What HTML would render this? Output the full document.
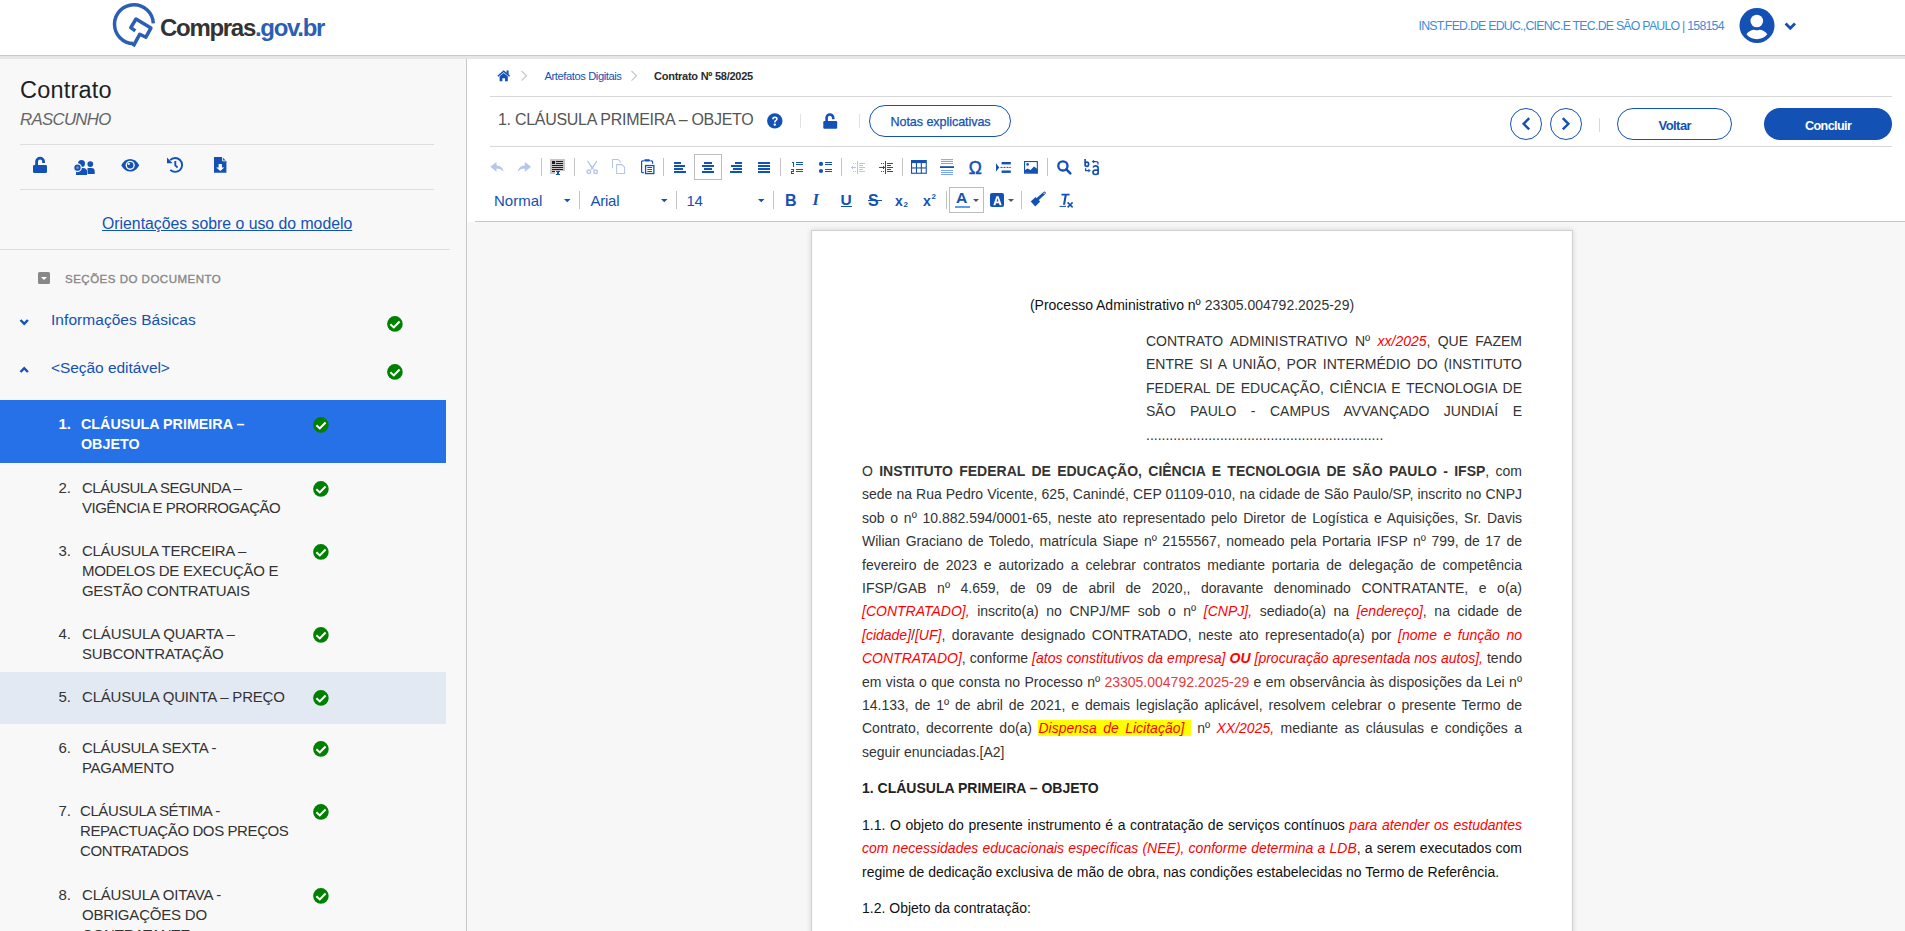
<!DOCTYPE html>
<html><head><meta charset="utf-8">
<style>
*{box-sizing:border-box}
html,body{margin:0;padding:0}
body{width:1905px;height:931px;overflow:hidden;position:relative;background:#fff;font-family:"Liberation Sans",sans-serif;color:#333}
.a{position:absolute}
.nw{white-space:nowrap}
svg{position:absolute;overflow:visible}
.sep{height:1px;background:#dedede}
.item{left:0;width:446px}
.num{left:58.5px;font-size:15px;line-height:20px;white-space:nowrap}
.txt{left:82px;font-size:15px;line-height:20px;letter-spacing:-0.3px;white-space:nowrap}
.p{position:absolute;left:862px;width:660px;font-size:14px;line-height:23.4px;text-align:justify;color:#333}
.r{color:#f00;font-style:italic}
.vs{width:1px;background:#c4c4c4}
.tl{font-size:15px;color:#1351b4;white-space:nowrap}
</style></head><body>

<!-- HEADER -->
<div class="a" style="left:0;top:0;width:1905px;height:55px;background:#fff"></div>
<div class="a" style="left:0;top:55px;width:1905px;height:1px;background:#c8c8c8"></div>
<div class="a" style="left:0;top:56px;width:1905px;height:3px;background:#e6e6e6"></div>

<svg style="left:108px;top:0" width="55" height="52" viewBox="0 0 55 52">
  <path d="M45.3 23.4 A19.4 19.4 0 1 0 25.4 43.6" fill="none" stroke="#2b5fb3" stroke-width="3.5"/>
  <path d="M25.2 46.4 L31.8 34.2 L37.9 37.2 L42.9 28.1 L28 19 L22.8 27.6 L27.3 30.9" fill="none" stroke="#2b5fb3" stroke-width="3.5" stroke-linejoin="round"/>
</svg>
<div class="a nw" style="left:160px;top:13px;font-size:24px;line-height:30px;font-weight:bold;letter-spacing:-1.3px;color:#333">Compras<span style="color:#2b5fb3">.gov.br</span></div>

<div class="a nw" style="left:1418.5px;top:18px;font-size:12.3px;line-height:16px;letter-spacing:-0.74px;color:#3b8dd9">INST.FED.DE EDUC.,CIENC.E TEC.DE SÃO PAULO | 158154</div>
<svg style="left:1739px;top:8px" width="36" height="36" viewBox="0 0 36 36">
  <circle cx="18" cy="17.5" r="17.5" fill="#1351b4"/>
  <circle cx="17.8" cy="13" r="6.3" fill="#fff"/>
  <path d="M7.4 26.3 C9.5 23.2 12.5 22 15.2 21.8 Q17.8 22.8 20.4 21.8 C23.3 22 26.2 23.2 28.3 26.3 C25.5 29.6 21.8 31.2 17.8 31.2 C13.8 31.2 10.2 29.6 7.4 26.3 Z" fill="#fff"/>
</svg>
<svg style="left:1784px;top:22px" width="13" height="9" viewBox="0 0 13 9">
  <path d="M1.6 1.6 L6.3 6.3 L11 1.6" fill="none" stroke="#1351b4" stroke-width="2.8"/>
</svg>

<!-- SIDEBAR -->
<div class="a" style="left:0;top:59px;width:466px;height:872px;background:#f8f8f8"></div>
<div class="a" style="left:466px;top:59px;width:1px;height:872px;background:#c8c8c8"></div>

<div class="a nw" style="left:20px;top:76px;font-size:23.5px;line-height:28px;color:#1f1f1f;letter-spacing:0.2px">Contrato</div>
<div class="a nw" style="left:20px;top:110px;font-size:16.8px;line-height:20px;font-style:italic;color:#666;letter-spacing:-0.68px">RASCUNHO</div>
<div class="a sep" style="left:20px;top:144px;width:414px"></div>
<div class="a sep" style="left:20px;top:189px;width:414px"></div>

<!-- sidebar tool icons -->
<svg style="left:33px;top:156px" width="15" height="17" viewBox="0 0 15 17">
  <path d="M3.6 9.4 V5.6 A3.5 3.5 0 0 1 10.6 5.6 V7" fill="none" stroke="#1351b4" stroke-width="2.8"/>
  <rect x="0" y="9" width="14" height="7.9" rx="1.2" fill="#1351b4"/>
</svg>
<svg style="left:73px;top:159px" width="23" height="17" viewBox="0 0 23 17">
  <circle cx="8.5" cy="4.5" r="3.5" fill="#1351b4"/>
  <path d="M3 16 V12.5 Q3 9 7 9 H10 Q14 9 14 12.5 V16 Z" fill="#1351b4"/>
  <circle cx="17.3" cy="5.1" r="2.9" fill="#1351b4"/>
  <path d="M14.5 15 V9.1 H18.5 Q21.7 9.1 21.7 12.5 V15 Z" fill="#1351b4"/>
  <circle cx="4.5" cy="8.7" r="3.8" fill="#1351b4" stroke="#f8f8f8" stroke-width="1.3"/>
  <circle cx="4.5" cy="8.7" r="1.4" fill="#6b8fd6"/>
</svg>
<svg style="left:121px;top:158.5px" width="19" height="14" viewBox="0 0 19 14">
  <path d="M0.2 6.3 C2.4 2 5.8 0 9.2 0 C12.6 0 16 2 18.2 6.3 C16 10.6 12.6 12.6 9.2 12.6 C5.8 12.6 2.4 10.6 0.2 6.3 Z" fill="#1351b4"/>
  <circle cx="9.2" cy="6.3" r="4.6" fill="#f8f8f8"/>
  <circle cx="9.2" cy="6.3" r="3.2" fill="#1351b4"/>
  <circle cx="7.8" cy="4.9" r="1.1" fill="#f8f8f8"/>
</svg>
<svg style="left:166px;top:156px" width="18" height="18" viewBox="0 0 18 18">
  <path d="M4.2 4.2 A6.9 6.9 0 1 1 4.3 13.8" fill="none" stroke="#1351b4" stroke-width="1.9"/>
  <path d="M1 1.5 V7.2 H6.6 Z" fill="#1351b4"/>
  <path d="M9.3 5 V9.4 L11.6 11.5" fill="none" stroke="#1351b4" stroke-width="1.9"/>
</svg>
<svg style="left:214px;top:157px" width="13" height="16" viewBox="0 0 13 16">
  <path d="M0 0 H8.2 L12.4 4.3 V15.8 H0 Z" fill="#1351b4"/>
  <path d="M8.6 0 V3.9 H12.4" fill="none" stroke="#f8f8f8" stroke-width="0.9"/>
  <path d="M4.6 7 H7.9 V10.5 H10.3 L6.25 14 L2.2 10.5 H4.6 Z" fill="#fff"/>
</svg>

<div class="a nw" style="left:102px;top:214.5px;font-size:15.8px;line-height:18px;color:#1351b4;text-decoration:underline;text-underline-offset:1px;letter-spacing:0px">Orientações sobre o uso do modelo</div>
<div class="a sep" style="left:0;top:249px;width:450px"></div>

<div class="a" style="left:38px;top:272px;width:12px;height:12px;background:#888;border-radius:1.5px"></div>
<div class="a" style="left:40.5px;top:276.5px;width:0;height:0;border-left:3.7px solid transparent;border-right:3.7px solid transparent;border-top:3.7px solid #fff"></div>
<div class="a nw" style="left:65px;top:273px;font-size:11.5px;line-height:13px;letter-spacing:0.5px;color:#888;-webkit-text-stroke:0.35px #888">SEÇÕES DO DOCUMENTO</div>

<svg style="left:19px;top:317.5px" width="11" height="9" viewBox="0 0 11 9">
  <path d="M1.5 2 L5.2 5.8 L8.9 2" fill="none" stroke="#1351b4" stroke-width="2.4"/>
</svg>
<div class="a nw" style="left:51px;top:310.5px;font-size:15.5px;line-height:18px;color:#1351b4;letter-spacing:0.05px">Informações Básicas</div>
<svg style="left:19px;top:365.2px" width="11" height="9" viewBox="0 0 11 9">
  <path d="M1.5 7 L5.2 3.2 L8.9 7" fill="none" stroke="#1351b4" stroke-width="2.4"/>
</svg>
<div class="a nw" style="left:51px;top:359px;font-size:15.5px;line-height:18px;color:#1351b4;letter-spacing:-0.06px">&lt;Seção editável&gt;</div>

<!-- check icons -->
<svg style="left:386.5px;top:316px" width="16" height="16" viewBox="0 0 16 16"><circle cx="7.9" cy="7.9" r="7.8" fill="#008000"/><path d="M3.4 8.2 L6.8 11.4 L12.6 5.6" fill="none" stroke="#fff" stroke-width="2.1"/></svg>
<svg style="left:386.5px;top:364px" width="16" height="16" viewBox="0 0 16 16"><circle cx="7.9" cy="7.9" r="7.8" fill="#008000"/><path d="M3.4 8.2 L6.8 11.4 L12.6 5.6" fill="none" stroke="#fff" stroke-width="2.1"/></svg>

<!-- items -->
<div class="a item" style="top:400px;height:63px;background:#2670e8"></div>
<div class="a num" style="top:414.1px;color:#fff;font-weight:bold">1.</div>
<div class="a txt" style="top:414.1px;left:81px;color:#fff;font-weight:bold;font-size:14.3px;letter-spacing:0">CLÁUSULA PRIMEIRA –<br>OBJETO</div>

<div class="a num" style="top:478.1px">2.</div>
<div class="a txt" style="top:478.1px;letter-spacing:-0.5px">CLÁUSULA SEGUNDA –<br>VIGÊNCIA E PRORROGAÇÃO</div>
<div class="a num" style="top:541.1px">3.</div>
<div class="a txt" style="top:541.1px">CLÁUSULA TERCEIRA –<br>MODELOS DE EXECUÇÃO E<br>GESTÃO CONTRATUAIS</div>
<div class="a num" style="top:624.1px">4.</div>
<div class="a txt" style="top:624.1px;letter-spacing:-0.15px">CLÁUSULA QUARTA –<br>SUBCONTRATAÇÃO</div>
<div class="a item" style="top:672px;height:52px;background:#e3e9f3"></div>
<div class="a num" style="top:687.1px">5.</div>
<div class="a txt" style="top:687.1px;letter-spacing:-0.2px">CLÁUSULA QUINTA – PREÇO</div>
<div class="a num" style="top:738.1px">6.</div>
<div class="a txt" style="top:738.1px">CLÁUSULA SEXTA -<br>PAGAMENTO</div>
<div class="a num" style="top:801.1px">7.</div>
<div class="a txt" style="top:801.1px;left:80px;letter-spacing:-0.4px">CLÁUSULA SÉTIMA -<br>REPACTUAÇÃO DOS PREÇOS<br>CONTRATADOS</div>
<div class="a num" style="top:885.1px">8.</div>
<div class="a txt" style="top:885.1px;letter-spacing:-0.2px">CLÁUSULA OITAVA -<br>OBRIGAÇÕES DO<br>CONTRATANTE</div>

<svg style="left:312.5px;top:417px" width="16" height="16" viewBox="0 0 16 16"><circle cx="7.9" cy="7.9" r="7.8" fill="#008000"/><path d="M3.4 8.2 L6.8 11.4 L12.6 5.6" fill="none" stroke="#fff" stroke-width="2.1"/></svg>
<svg style="left:312.5px;top:481px" width="16" height="16" viewBox="0 0 16 16"><circle cx="7.9" cy="7.9" r="7.8" fill="#008000"/><path d="M3.4 8.2 L6.8 11.4 L12.6 5.6" fill="none" stroke="#fff" stroke-width="2.1"/></svg>
<svg style="left:312.5px;top:544px" width="16" height="16" viewBox="0 0 16 16"><circle cx="7.9" cy="7.9" r="7.8" fill="#008000"/><path d="M3.4 8.2 L6.8 11.4 L12.6 5.6" fill="none" stroke="#fff" stroke-width="2.1"/></svg>
<svg style="left:312.5px;top:627px" width="16" height="16" viewBox="0 0 16 16"><circle cx="7.9" cy="7.9" r="7.8" fill="#008000"/><path d="M3.4 8.2 L6.8 11.4 L12.6 5.6" fill="none" stroke="#fff" stroke-width="2.1"/></svg>
<svg style="left:312.5px;top:690px" width="16" height="16" viewBox="0 0 16 16"><circle cx="7.9" cy="7.9" r="7.8" fill="#008000"/><path d="M3.4 8.2 L6.8 11.4 L12.6 5.6" fill="none" stroke="#fff" stroke-width="2.1"/></svg>
<svg style="left:312.5px;top:741px" width="16" height="16" viewBox="0 0 16 16"><circle cx="7.9" cy="7.9" r="7.8" fill="#008000"/><path d="M3.4 8.2 L6.8 11.4 L12.6 5.6" fill="none" stroke="#fff" stroke-width="2.1"/></svg>
<svg style="left:312.5px;top:804px" width="16" height="16" viewBox="0 0 16 16"><circle cx="7.9" cy="7.9" r="7.8" fill="#008000"/><path d="M3.4 8.2 L6.8 11.4 L12.6 5.6" fill="none" stroke="#fff" stroke-width="2.1"/></svg>
<svg style="left:312.5px;top:888px" width="16" height="16" viewBox="0 0 16 16"><circle cx="7.9" cy="7.9" r="7.8" fill="#008000"/><path d="M3.4 8.2 L6.8 11.4 L12.6 5.6" fill="none" stroke="#fff" stroke-width="2.1"/></svg>

<!-- BREADCRUMB -->
<svg style="left:496.5px;top:69.5px" width="14" height="12" viewBox="0 0 14 12">
  <path d="M0.8 6.2 L6.7 1.2 L12.6 6.2" fill="none" stroke="#1351b4" stroke-width="1.5"/>
  <rect x="9.6" y="0.4" width="2" height="3.8" fill="#1351b4"/>
  <path d="M2.6 6.3 L6.7 2.9 L10.8 6.3 V11.2 H8 V8.2 H5.4 V11.2 H2.6 Z" fill="#1351b4"/>
</svg>
<svg style="left:520px;top:70px" width="9" height="12" viewBox="0 0 9 12">
  <path d="M1.5 1 L6.5 5.8 L1.5 10.6" fill="none" stroke="#c8c8c8" stroke-width="1.2"/>
</svg>
<div class="a nw" style="left:544.5px;top:69px;font-size:11.2px;line-height:14px;color:#1351b4;letter-spacing:-0.42px">Artefatos Digitais</div>
<svg style="left:629.5px;top:70px" width="9" height="12" viewBox="0 0 9 12">
  <path d="M1.5 1 L6.5 5.8 L1.5 10.6" fill="none" stroke="#c8c8c8" stroke-width="1.2"/>
</svg>
<div class="a nw" style="left:654px;top:69px;font-size:11px;line-height:14px;font-weight:bold;color:#2b2b2b;letter-spacing:-0.25px">Contrato Nº 58/2025</div>
<div class="a" style="left:490px;top:96px;width:1402px;height:1px;background:#d8d8d8"></div>

<!-- TITLE BAR -->
<div class="a nw" style="left:498px;top:110.5px;font-size:16px;line-height:18px;color:#555;letter-spacing:-0.29px">1. CLÁUSULA PRIMEIRA – OBJETO</div>
<svg style="left:766.5px;top:113px" width="16" height="16" viewBox="0 0 16 16">
  <circle cx="7.8" cy="7.9" r="7.7" fill="#1351b4"/>
  <path d="M5.1 6.2 Q5.1 3.4 7.9 3.4 Q10.7 3.4 10.7 5.8 Q10.7 7.3 9.3 8 Q8.6 8.4 8.6 9.5 H7 Q7 7.6 8.2 7 Q9 6.6 9 5.9 Q9 5 7.9 5 Q6.8 5 6.8 6.2 Z" fill="#fff"/>
  <circle cx="7.8" cy="11.6" r="1.2" fill="#fff"/>
</svg>
<div class="a vs" style="left:800px;top:114px;height:14px;background:#e2e2e2"></div>
<svg style="left:822.5px;top:112.5px" width="15" height="17" viewBox="0 0 15 17">
  <path d="M3.6 8.6 V4.8 A3.3 3.3 0 0 1 10.2 4.8 V6.2" fill="none" stroke="#1351b4" stroke-width="2.6"/>
  <rect x="0.3" y="8.1" width="13.9" height="7.7" rx="1.2" fill="#1351b4"/>
</svg>
<div class="a vs" style="left:859px;top:114px;height:14px;background:#e2e2e2"></div>
<div class="a" style="left:869px;top:105px;width:142px;height:32px;border:1.3px solid #1351b4;border-radius:16px"></div>
<div class="a nw" style="left:890.5px;top:115px;font-size:12.6px;line-height:15px;color:#1351b4;letter-spacing:-0.08px;-webkit-text-stroke:0.25px #1351b4">Notas explicativas</div>

<div class="a" style="left:1510px;top:108px;width:32px;height:32px;border:1.2px solid #1351b4;border-radius:50%"></div>
<svg style="left:1521px;top:117px" width="10" height="14" viewBox="0 0 10 14">
  <path d="M8.2 1.2 L2.6 6.8 L8.2 12.4" fill="none" stroke="#1351b4" stroke-width="2.4"/>
</svg>
<div class="a" style="left:1550px;top:108px;width:32px;height:32px;border:1.2px solid #1351b4;border-radius:50%"></div>
<svg style="left:1561px;top:117px" width="10" height="14" viewBox="0 0 10 14">
  <path d="M1.8 1.2 L7.4 6.8 L1.8 12.4" fill="none" stroke="#1351b4" stroke-width="2.4"/>
</svg>
<div class="a vs" style="left:1599px;top:118px;height:14px;background:#d8d8d8"></div>
<div class="a" style="left:1617px;top:108px;width:115px;height:32px;border:1.2px solid #1351b4;border-radius:16px"></div>
<div class="a nw" style="left:1658.5px;top:118px;font-size:13px;line-height:15px;font-weight:bold;color:#1351b4;letter-spacing:-0.55px">Voltar</div>
<div class="a" style="left:1764px;top:108px;width:128px;height:32px;background:#1351b4;border-radius:16px"></div>
<div class="a nw" style="left:1805px;top:118.5px;font-size:12.6px;line-height:15px;font-weight:bold;color:#fff;letter-spacing:-0.6px">Concluir</div>

<div class="a" style="left:490px;top:146px;width:1402px;height:1px;background:#d8d8d8"></div>

<!-- TOOLBAR ROW 1 -->
<svg style="left:490px;top:161px" width="15" height="12" viewBox="0 0 15 12">
  <path d="M0.3 5.8 L6.5 1 V4.5 Q12.6 4.7 13.6 10.8 Q11 7.4 6.5 7.4 V10.8 Z" fill="#b4c6ea"/>
</svg>
<svg style="left:516.6px;top:161px" width="15" height="12" viewBox="0 0 15 12">
  <path d="M14.1 5.8 L7.8 1 V4.5 Q1.7 4.7 0.7 10.8 Q3.3 7.4 7.8 7.4 V10.8 Z" fill="#b4c6ea"/>
</svg>
<div class="a vs" style="left:541px;top:158px;height:18px"></div>
<svg style="left:550px;top:159px" width="16" height="17" viewBox="0 0 16 17" shape-rendering="crispEdges">
  <rect x="0" y="0" width="15" height="12" fill="#c6c6c6"/><rect x="0" y="12" width="5" height="3" fill="#c6c6c6"/>
  <rect x="2" y="2" width="3" height="3" fill="#1e1e1e"/>
  <rect x="6" y="2" width="7" height="1" fill="#1e1e1e"/><rect x="6" y="4" width="7" height="1" fill="#1e1e1e"/>
  <rect x="2" y="6" width="11" height="1" fill="#1e1e1e"/><rect x="2" y="8" width="11" height="1" fill="#1e1e1e"/><rect x="2" y="10" width="11" height="1" fill="#1e1e1e"/>
  <rect x="2" y="12" width="3" height="1" fill="#1e1e1e"/>
  <rect x="6" y="12" width="4" height="1" fill="#1351b4"/><rect x="7" y="13" width="1.5" height="2" fill="#1351b4"/><rect x="6" y="15" width="4" height="1" fill="#1351b4"/>
</svg>
<div class="a vs" style="left:574px;top:158px;height:18px"></div>
<svg style="left:586px;top:160px" width="13" height="15" viewBox="0 0 13 15">
  <path d="M1 0.3 L6.4 7.6 L5.6 8.6 Z M11.6 0.3 L6.2 7.6 L7 8.6 Z" fill="#b4c6ea"/>
  <path d="M1.5 0.8 L7.6 9.6 M11 0.8 L4.9 9.6" stroke="#b4c6ea" stroke-width="1.2" fill="none"/>
  <circle cx="2.8" cy="11.8" r="1.8" fill="none" stroke="#b4c6ea" stroke-width="1.4"/>
  <circle cx="9.6" cy="11.8" r="1.8" fill="none" stroke="#b4c6ea" stroke-width="1.4"/>
</svg>
<svg style="left:612px;top:159px" width="14" height="15" viewBox="0 0 14 15">
  <path d="M0.5 9.3 V0.5 H6.1 L9 3.4" fill="none" stroke="#b4c6ea" stroke-width="1.05"/>
  <path d="M4.6 5.6 H9.9 L12.6 8.3 V14.5 H4.6 Z" fill="none" stroke="#b4c6ea" stroke-width="1.05"/>
</svg>
<svg style="left:641px;top:159px" width="15" height="16" viewBox="0 0 15 16">
  <path d="M2.9 1.9 H1.6 Q0.6 1.9 0.6 2.9 V12.8 Q0.6 13.7 1.6 13.7 H2.8" fill="none" stroke="#1351b4" stroke-width="1.2"/>
  <path d="M9.3 1.9 H10.6 Q11.6 1.9 11.6 2.9 V4.8" fill="none" stroke="#1351b4" stroke-width="1.2"/>
  <rect x="3.2" y="0.2" width="5.8" height="2.4" rx="1" fill="#1351b4"/>
  <rect x="4.55" y="6.55" width="8.3" height="8" fill="none" stroke="#1351b4" stroke-width="1.3"/>
  <rect x="6.3" y="8" width="4.8" height="1" fill="#1351b4"/><rect x="6.3" y="10" width="4.8" height="1" fill="#1351b4"/><rect x="6.3" y="12" width="4.8" height="1" fill="#1351b4"/>
</svg>
<div class="a vs" style="left:663px;top:158px;height:18px"></div>
<!-- align -->
<svg style="left:674px;top:161px" width="13" height="13" viewBox="0 0 13 13" shape-rendering="crispEdges"><rect x="0" y="1" width="7" height="2" fill="#1351b4"/><rect x="0" y="4" width="11" height="2" fill="#1351b4"/><rect x="0" y="7" width="9" height="2" fill="#1351b4"/><rect x="0" y="10" width="12" height="2" fill="#1351b4"/></svg>
<div class="a" style="left:694px;top:154px;width:28px;height:26px;border:1px solid #bdbdbd"></div>
<svg style="left:702px;top:161px" width="13" height="13" viewBox="0 0 13 13" shape-rendering="crispEdges"><rect x="2" y="1" width="8" height="2" fill="#1351b4"/><rect x="0" y="4" width="12" height="2" fill="#1351b4"/><rect x="2" y="7" width="8" height="2" fill="#1351b4"/><rect x="0" y="10" width="12" height="2" fill="#1351b4"/></svg>
<svg style="left:730px;top:161px" width="13" height="13" viewBox="0 0 13 13" shape-rendering="crispEdges"><rect x="5" y="1" width="7" height="2" fill="#1351b4"/><rect x="1" y="4" width="11" height="2" fill="#1351b4"/><rect x="3" y="7" width="9" height="2" fill="#1351b4"/><rect x="0" y="10" width="12" height="2" fill="#1351b4"/></svg>
<svg style="left:758px;top:161px" width="13" height="13" viewBox="0 0 13 13" shape-rendering="crispEdges"><rect x="0" y="1" width="12" height="2" fill="#1351b4"/><rect x="0" y="4" width="12" height="2" fill="#1351b4"/><rect x="0" y="7" width="12" height="2" fill="#1351b4"/><rect x="0" y="10" width="12" height="2" fill="#1351b4"/></svg>
<div class="a vs" style="left:780px;top:158px;height:18px"></div>
<!-- lists -->
<svg style="left:790px;top:161px" width="14" height="14" viewBox="0 0 14 14" shape-rendering="crispEdges"><rect x="2" y="1" width="1" height="1" fill="#1351b4"/><rect x="3" y="1" width="1" height="5" fill="#1351b4"/><rect x="1" y="8" width="3" height="1" fill="#1351b4"/><rect x="3" y="8" width="1" height="3" fill="#1351b4"/><rect x="1" y="10" width="3" height="1" fill="#1351b4"/><rect x="1" y="10" width="1" height="3" fill="#1351b4"/><rect x="1" y="12" width="3" height="1" fill="#1351b4"/><rect x="6" y="1" width="7" height="1" fill="#1351b4"/><rect x="6" y="3" width="7" height="1" fill="#1351b4"/><rect x="6" y="8" width="7" height="1" fill="#1351b4"/><rect x="6" y="10" width="7" height="1" fill="#1351b4"/></svg>
<svg style="left:818px;top:161px" width="15" height="13" viewBox="0 0 15 13"><circle cx="3" cy="2.9" r="2.1" fill="#1351b4"/><circle cx="3" cy="10" r="2.1" fill="#1351b4"/><rect x="7" y="1" width="7" height="1" fill="#1351b4" shape-rendering="crispEdges"/><rect x="7" y="3" width="7" height="1" fill="#1351b4" shape-rendering="crispEdges"/><rect x="7" y="8" width="7" height="1" fill="#1351b4" shape-rendering="crispEdges"/><rect x="7" y="10" width="7" height="1" fill="#1351b4" shape-rendering="crispEdges"/></svg>
<div class="a vs" style="left:841px;top:158px;height:18px"></div>
<svg style="left:850px;top:161px" width="16" height="14" viewBox="0 0 16 14" shape-rendering="crispEdges"><rect x="7" y="0" width="1" height="13" fill="#b4c6ea"/><rect x="3" y="2" width="1" height="1" fill="#b4c6ea"/><rect x="5" y="2" width="1" height="1" fill="#b4c6ea"/><rect x="3" y="10" width="1" height="1" fill="#b4c6ea"/><rect x="5" y="10" width="1" height="1" fill="#b4c6ea"/><rect x="1" y="6" width="5" height="1" fill="#b4c6ea"/><rect x="2" y="5" width="1" height="3" fill="#b4c6ea"/><rect x="3" y="4" width="0" height="0" fill="#b4c6ea"/><rect x="9" y="2" width="6" height="1" fill="#b4c6ea"/><rect x="9" y="4" width="4" height="1" fill="#b4c6ea"/><rect x="9" y="6" width="6" height="1" fill="#b4c6ea"/><rect x="9" y="8" width="4" height="1" fill="#b4c6ea"/><rect x="9" y="10" width="6" height="1" fill="#b4c6ea"/></svg>
<svg style="left:878px;top:161px" width="16" height="14" viewBox="0 0 16 14" shape-rendering="crispEdges"><rect x="7" y="0" width="1" height="13" fill="#1351b4"/><rect x="3" y="2" width="1" height="1" fill="#1351b4"/><rect x="5" y="2" width="1" height="1" fill="#1351b4"/><rect x="3" y="10" width="1" height="1" fill="#1351b4"/><rect x="5" y="10" width="1" height="1" fill="#1351b4"/><rect x="1" y="6" width="6" height="1" fill="#1351b4"/><rect x="5" y="5" width="1" height="1" fill="#1351b4"/><rect x="5" y="7" width="1" height="1" fill="#1351b4"/><rect x="9" y="2" width="6" height="1" fill="#1351b4"/><rect x="9" y="4" width="4" height="1" fill="#1351b4"/><rect x="9" y="6" width="6" height="1" fill="#1351b4"/><rect x="9" y="8" width="4" height="1" fill="#1351b4"/><rect x="9" y="10" width="6" height="1" fill="#1351b4"/></svg>
<div class="a vs" style="left:902px;top:158px;height:18px"></div>
<!-- table, hr, omega, blocks, image -->
<svg style="left:911px;top:160px" width="16" height="14" viewBox="0 0 16 14">
  <rect x="0" y="0" width="15.8" height="13.8" fill="#1351b4"/>
  <rect x="1.1" y="3.1" width="3.8" height="4.3" fill="#fff"/><rect x="6" y="3.1" width="3.8" height="4.3" fill="#fff"/><rect x="10.9" y="3.1" width="3.8" height="4.3" fill="#fff"/>
  <rect x="1.1" y="8.5" width="3.8" height="4.2" fill="#fff"/><rect x="6" y="8.5" width="3.8" height="4.2" fill="#fff"/><rect x="10.9" y="8.5" width="3.8" height="4.2" fill="#fff"/>
</svg>
<svg style="left:940px;top:158.5px" width="14" height="17" viewBox="0 0 14 17">
  <rect x="1" y="0.3" width="12" height="0.8" fill="#5b8fe8"/><rect x="1" y="2.2" width="12" height="0.8" fill="#5b8fe8"/><rect x="1" y="4.1" width="12" height="0.8" fill="#5b8fe8"/>
  <rect x="0" y="7.2" width="14" height="1.8" fill="#1351b4"/>
  <rect x="1" y="11.2" width="12" height="0.8" fill="#5b8fe8"/><rect x="1" y="13.1" width="12" height="0.8" fill="#5b8fe8"/><rect x="1" y="15" width="12" height="0.8" fill="#5b8fe8"/>
</svg>
<div class="a nw" style="left:968.7px;top:157.6px;font-size:17.5px;line-height:20px;color:#1351b4;-webkit-text-stroke:0.5px #1351b4">Ω</div>
<svg style="left:996px;top:162px" width="15" height="11" viewBox="0 0 15 11">
  <path d="M0 1.3 L3.3 5.4 L0 9.5 Z" fill="#1351b4"/>
  <rect x="5.6" y="0" width="9.2" height="2.4" fill="#1351b4"/>
  <rect x="4.5" y="4.9" width="2" height="1" fill="#1351b4"/><rect x="7.5" y="4.9" width="2" height="1" fill="#1351b4"/><rect x="10.5" y="4.9" width="2" height="1" fill="#1351b4"/><rect x="13.2" y="4.9" width="1.6" height="1" fill="#1351b4"/>
  <rect x="5.6" y="8.5" width="9.2" height="2.4" fill="#1351b4"/>
</svg>
<svg style="left:1024px;top:161px" width="14" height="13" viewBox="0 0 14 13">
  <rect x="0.55" y="0.55" width="12.8" height="11.6" fill="none" stroke="#1351b4" stroke-width="1.1"/>
  <path d="M0.5 11.8 L0.5 9.5 L3.5 7.5 L6.5 9 L10 5.4 L13.4 8 V12.2 Z" fill="#1351b4"/>
  <circle cx="3.6" cy="3.4" r="1.3" fill="#1351b4"/>
</svg>
<div class="a vs" style="left:1047px;top:158px;height:18px"></div>
<svg style="left:1057px;top:160px" width="15" height="15" viewBox="0 0 15 15">
  <circle cx="5.9" cy="5.9" r="4.6" fill="none" stroke="#1351b4" stroke-width="2.3"/>
  <path d="M9.4 9.4 L13.3 13.3" stroke="#1351b4" stroke-width="2.6" stroke-linecap="round"/>
</svg>
<svg style="left:1084px;top:159px" width="16" height="17" viewBox="0 0 16 17">
  <path d="M1.1 0 V7.2 M1.1 4.8 Q1.3 3.2 2.9 3.2 Q4.6 3.2 4.6 5.2 Q4.6 7.3 2.9 7.3 Q1.3 7.3 1.1 5.8" fill="none" stroke="#1351b4" stroke-width="1.7"/>
  <path d="M1.6 9.2 V11.6 H4.6" fill="none" stroke="#1351b4" stroke-width="1.3"/><path d="M4.4 9.7 L6.8 11.6 L4.4 13.5 Z" fill="#1351b4"/>
  <path d="M14 5.6 V4.2 Q14 2.6 12.2 2.6 H9.8" fill="none" stroke="#1351b4" stroke-width="1.3"/><path d="M10.1 0.7 L7.7 2.6 L10.1 4.5 Z" fill="#1351b4"/>
  <path d="M9.1 8.6 Q9.6 6.9 11.6 6.9 Q14.1 6.9 14.1 9.3 V15.6 M14.1 11.1 H11.5 Q9 11.1 9 13.3 Q9 15.5 11.2 15.5 Q13.3 15.5 14.1 13.8" fill="none" stroke="#1351b4" stroke-width="1.7"/>
</svg>

<!-- TOOLBAR ROW 2 -->
<div class="a tl" style="left:494px;top:192px;line-height:17px">Normal</div>
<svg style="left:563.5px;top:199px" width="7" height="4" viewBox="0 0 7 4"><path d="M0 0 H6.5 L3.25 3.3 Z" fill="#1351b4"/></svg>
<div class="a vs" style="left:579px;top:191px;height:18px"></div>
<div class="a tl" style="left:590.5px;top:192px;line-height:17px;letter-spacing:-0.25px">Arial</div>
<svg style="left:661px;top:199px" width="7" height="4" viewBox="0 0 7 4"><path d="M0 0 H6.5 L3.25 3.3 Z" fill="#1351b4"/></svg>
<div class="a vs" style="left:676px;top:191px;height:18px"></div>
<div class="a tl" style="left:686.5px;top:192px;line-height:17px;letter-spacing:-0.3px">14</div>
<svg style="left:757.5px;top:199px" width="7" height="4" viewBox="0 0 7 4"><path d="M0 0 H6.5 L3.25 3.3 Z" fill="#1351b4"/></svg>
<div class="a vs" style="left:773px;top:191px;height:18px"></div>

<div class="a nw" style="left:785px;top:191.5px;font-size:16px;line-height:18px;font-weight:bold;color:#1351b4">B</div>
<div class="a nw" style="left:812.5px;top:191px;font-size:16.5px;line-height:18px;font-family:'Liberation Serif',serif;font-weight:bold;font-style:italic;color:#1351b4">I</div>
<div class="a nw" style="left:840.5px;top:191px;font-size:15.5px;line-height:18px;font-weight:bold;color:#1351b4">U</div>
<div class="a" style="left:841px;top:206px;width:11px;height:1.3px;background:#1351b4"></div>
<div class="a nw" style="left:868px;top:192px;font-size:16px;line-height:18px;font-weight:bold;color:#1351b4">S</div>
<div class="a" style="left:867.5px;top:199.5px;width:14px;height:1.3px;background:#1351b4"></div>
<div class="a nw" style="left:895px;top:193px;font-size:14px;line-height:16px;font-weight:bold;color:#1351b4">x</div>
<div class="a nw" style="left:903.5px;top:199.5px;font-size:8px;line-height:9px;font-weight:bold;color:#1351b4">2</div>
<div class="a nw" style="left:923px;top:193px;font-size:14px;line-height:16px;font-weight:bold;color:#1351b4">x</div>
<div class="a nw" style="left:931.5px;top:191.5px;font-size:8px;line-height:9px;font-weight:bold;color:#1351b4">2</div>
<div class="a vs" style="left:946px;top:191px;height:18px"></div>

<div class="a" style="left:949px;top:187px;width:35px;height:26px;border:1px solid #bdbdbd"></div>
<div class="a nw" style="left:956px;top:189.5px;font-size:14.5px;line-height:17px;font-weight:bold;color:#1351b4;transform:scaleX(1.08);transform-origin:0 0">A</div>
<div class="a" style="left:955px;top:206px;width:15px;height:2px;background:#5b9cf0"></div>
<svg style="left:973px;top:198.5px" width="7" height="4" viewBox="0 0 7 4"><path d="M0 0 H6 L3 3 Z" fill="#555"/></svg>
<div class="a" style="left:990px;top:193px;width:14px;height:13.5px;background:#1351b4;border-radius:2px"></div>
<svg style="left:991.5px;top:194.5px" width="11" height="11" viewBox="0 0 11 11"><path d="M1.3 10.3 L4.4 1.2 H6.6 L9.7 10.3 H7.6 L7 8.3 H4 L3.4 10.3 Z M4.5 6.6 H6.5 L5.5 3.3 Z" fill="#fff"/></svg>
<svg style="left:1008px;top:198.5px" width="7" height="4" viewBox="0 0 7 4"><path d="M0 0 H6 L3 3 Z" fill="#555"/></svg>
<div class="a vs" style="left:1021px;top:191px;height:18px"></div>
<svg style="left:1029.5px;top:192px" width="16" height="16" viewBox="0 0 16 16">
  <path d="M0.7 9.6 L5.6 5 L10.2 9.5 L5.3 14.6 Z" fill="#1351b4"/>
  <path d="M8.2 6.6 L14.4 1" stroke="#1351b4" stroke-width="2.8" stroke-linecap="round"/>
  <circle cx="14.1" cy="1.3" r="0.7" fill="#fff"/>
</svg>
<svg style="left:1058.5px;top:192.5px" width="15" height="15" viewBox="0 0 15 15">
  <path d="M2.6 0.7 H10.7 L10.4 2.4 H7.7 L6.1 11.7 H4 L5.6 2.4 H2.3 Z" fill="#1351b4"/>
  <rect x="0.5" y="12.9" width="6.5" height="1" fill="#1351b4"/>
  <path d="M8.6 9.4 L13.6 14.4 M13.6 9.4 L8.6 14.4" stroke="#1351b4" stroke-width="1.5"/>
</svg>

<div class="a" style="left:475px;top:221px;width:1430px;height:1px;background:#c8c8c8"></div>

<!-- DOCUMENT AREA -->
<div class="a" style="left:467px;top:222px;width:1438px;height:709px;background:#f7f7f7"></div>
<div class="a" style="left:811px;top:230px;width:762px;height:720px;background:#fff;border:1px solid #d0d0d0;box-shadow:0 0 6px rgba(0,0,0,.14)"></div>
<div class="p" style="top:294px;text-align:center;color:#111">(Processo Administrativo nº <span style="color:#333">23305.004792.2025-29)</span></div>
<div class="p" style="top:330px;left:1146px;width:376px">CONTRATO ADMINISTRATIVO Nº <span class="r">xx/2025</span>, QUE FAZEM ENTRE SI A UNIÃO, POR INTERMÉDIO DO (INSTITUTO FEDERAL DE EDUCAÇÃO, CIÊNCIA E TECNOLOGIA DE SÃO PAULO - CAMPUS AVVANÇADO JUNDIAÍ E .............................................................</div>
<div class="p" style="top:460px">O <b>INSTITUTO FEDERAL DE EDUCAÇÃO, CIÊNCIA E TECNOLOGIA DE SÃO PAULO - IFSP</b>, com sede na Rua Pedro Vicente, 625, Canindé, CEP 01109-010, na cidade de São Paulo/SP, inscrito no CNPJ sob o nº 10.882.594/0001-65, neste ato representado pelo Diretor de Logística e Aquisições, Sr. Davis Wilian Graciano de Toledo, matrícula Siape nº 2155567, nomeado pela Portaria IFSP nº 799, de 17 de fevereiro de 2023 e autorizado a celebrar contratos mediante portaria de delegação de competência IFSP/GAB nº 4.659, de 09 de abril de 2020,, doravante denominado CONTRATANTE, e o(a) <span class="r">[CONTRATADO],</span> inscrito(a) no CNPJ/MF sob o nº <span class="r">[CNPJ],</span> sediado(a) na <span class="r">[endereço]</span>, na cidade de <span class="r">[cidade]</span>/<span class="r">[UF]</span>, doravante designado CONTRATADO, neste ato representado(a) por <span class="r">[nome e função no CONTRATADO]</span>, conforme <span class="r">[atos constitutivos da empresa]</span> <span class="r"><b>OU</b></span> <span class="r">[procuração apresentada nos autos],</span> tendo em vista o que consta no Processo nº <span style="color:#e8393a">23305.004792.2025-29</span> e em observância às disposições da Lei nº 14.133, de 1º de abril de 2021, e demais legislação aplicável, resolvem celebrar o presente Termo de Contrato, decorrente do(a) <span class="r" style="background:#ffff00">Dispensa de Licitação]&nbsp;</span> nº <span class="r">XX/2025,</span> mediante as cláusulas e condições a seguir enunciadas.[A2]</div>
<div class="p" style="top:777px;font-weight:bold;color:#222">1. CLÁUSULA PRIMEIRA – OBJETO</div>
<div class="p" style="top:814px;color:#111">1.1. O objeto do presente instrumento é a contratação de serviços contínuos <span class="r">para atender os estudantes com necessidades educacionais específicas (NEE), conforme determina a LDB</span>, a serem executados com regime de dedicação exclusiva de mão de obra, nas condições estabelecidas no Termo de Referência.</div>
<div class="p" style="top:897px;color:#111">1.2. Objeto da contratação:</div>


</body></html>
